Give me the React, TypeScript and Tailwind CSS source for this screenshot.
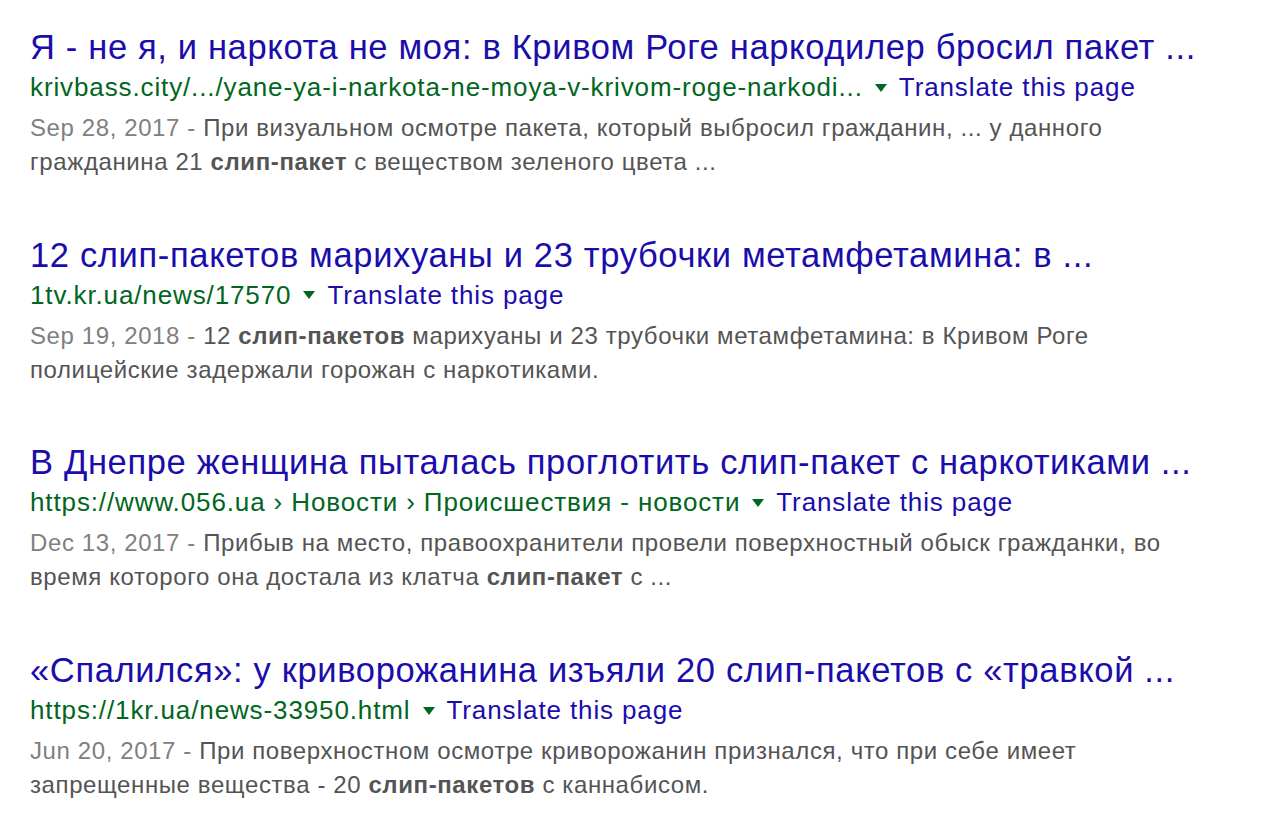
const results = [
  {
    title: "Я - не я, и наркота не моя: в Кривом Роге наркодилер бросил пакет ...",
    url: "krivbass.city/.../yane-ya-i-narkota-ne-moya-v-krivom-roge-narkodi...",
    date: "Sep 28, 2017",
    lines: [
      ["При визуальном осмотре пакета, который выбросил гражданин, ... у данного"],
      ["гражданина 21 ", { b: "слип-пакет" }, " с веществом зеленого цвета ..."],
    ],
  },
  {
    title: "12 слип-пакетов марихуаны и 23 трубочки метамфетамина: в ...",
    url: "1tv.kr.ua/news/17570",
    date: "Sep 19, 2018",
    lines: [
      ["12 ", { b: "слип-пакетов" }, " марихуаны и 23 трубочки метамфетамина: в Кривом Роге"],
      ["полицейские задержали горожан с наркотиками."],
    ],
  },
  {
    title: "В Днепре женщина пыталась проглотить слип-пакет с наркотиками ...",
    url: "https://www.056.ua › Новости › Происшествия - новости",
    date: "Dec 13, 2017",
    lines: [
      ["Прибыв на место, правоохранители провели поверхностный обыск гражданки, во"],
      ["время которого она достала из клатча ", { b: "слип-пакет" }, " с ..."],
    ],
  },
  {
    title: "«Спалился»: у криворожанина изъяли 20 слип-пакетов с «травкой ...",
    url: "https://1kr.ua/news-33950.html",
    date: "Jun 20, 2017",
    lines: [
      ["При поверхностном осмотре криворожанин признался, что при себе имеет"],
      ["запрещенные вещества - 20 ", { b: "слип-пакетов" }, " с каннабисом."],
    ],
  },
];

type Part = string | { b: string };

function Line({ parts }: { parts: Part[] }) {
  return (
    <>
      {parts.map((p, i) =>
        typeof p === "string" ? (
          <span key={i}>{p}</span>
        ) : (
          <b key={i} className="font-bold">{p.b}</b>
        )
      )}
    </>
  );
}

export default function App() {
  return (
    <div className="min-h-[833px] w-[1280px] overflow-hidden bg-white pl-[30px] pt-[27px] font-['Liberation_Sans',Arial,sans-serif]">
      {results.map((r, i) => (
        <div key={i} className="mb-[55.7px]">
          <div className="whitespace-nowrap text-[34.5px] leading-[40px] tracking-[0.65px] text-[#1a0dab]">{r.title}</div>
          <div className="flex items-center whitespace-nowrap text-[26px] leading-[41px] tracking-[0.88px]">
            <span className="text-[#006621]">{r.url}</span>
            <span className="ml-[12px] mr-[12px] h-0 w-0 border-x-[6.5px] border-t-[8px] border-x-transparent border-t-[#006621]" />
            <span className="text-[#1a0dab]">Translate this page</span>
          </div>
          <div className="mt-[3px] whitespace-nowrap text-[24px] leading-[34px] tracking-[0.6px] text-[#545454]">
            <div>
              <span className="text-[#808080]">{r.date} - </span>
              <Line parts={r.lines[0] as Part[]} />
            </div>
            <div>
              <Line parts={r.lines[1] as Part[]} />
            </div>
          </div>
        </div>
      ))}
    </div>
  );
}
